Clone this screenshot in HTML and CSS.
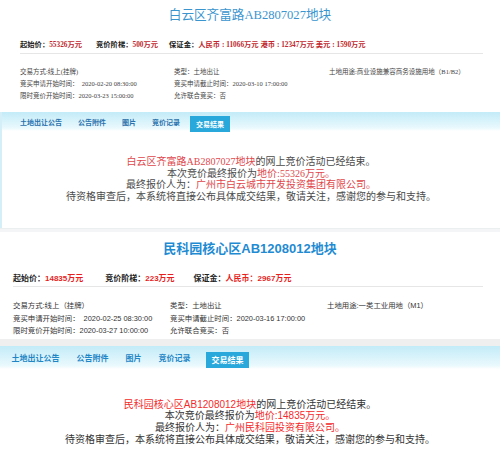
FILE: index.html
```html
<!DOCTYPE html>
<html lang="zh-CN">
<head>
<meta charset="utf-8">
<link rel="stylesheet" href="styles.css">
</head>
<body>
<div class="shot s1">
  <h1 class="title">白云区齐富路AB2807027地块</h1>
  <div class="prices">
    <span class="item"><b>起始价：</b><em>55326万元</em></span>
    <span class="item"><b>竞价阶梯：</b><em>500万元</em></span>
    <span class="item"><b>保证金：</b><em>人民币 : 11066万元 港币 : 12347万元 美元 : 1590万元</em></span>
  </div>
  <div class="info">
    <span>交易方式:线上(挂牌)</span>
    <span>类型：土地出让</span>
    <span>土地用途:商业设施兼容商务设施用地（B1/B2）</span>
    <span>竞买申请开始时间：&nbsp; 2020-02-20 08:30:00</span>
    <span>竞买申请截止时间：2020-03-10 17:00:00</span>
    <span></span>
    <span>限时竞价开始时间：2020-03-23 15:00:00</span>
    <span>允许联合竞买：否</span>
    <span></span>
  </div>
  <div class="panel">
    <div class="tabs">
      <span class="tab">土地出让公告</span>
      <span class="tab">公告附件</span>
      <span class="tab">图片</span>
      <span class="tab">竞价记录</span>
      <span class="tab active">交易结果</span>
    </div>
    <div class="result">
      <p><span class="red">白云区齐富路AB2807027地块</span>的网上竞价活动已经结束。</p>
      <p>本次竞价最终报价为<span class="red">地价:55326万元。</span></p>
      <p>最终报价人为：<span class="red">广州市白云城市开发投资集团有限公司。</span></p>
      <p>待资格审查后，本系统将直接公布具体成交结果，敬请关注，感谢您的参与和支持。</p>
    </div>
  </div>
</div>
<div class="sep"></div>
<div class="shot s2">
  <h1 class="title">民科园核心区AB1208012地块</h1>
  <div class="prices">
    <span class="item"><b>起始价：</b><em>14835万元</em></span>
    <span class="item"><b>竞价阶梯：</b><em>223万元</em></span>
    <span class="item"><b>保证金：</b><em>人民币：2967万元</em></span>
  </div>
  <div class="info">
    <span>交易方式:线上（挂牌）</span>
    <span>类型：土地出让</span>
    <span>土地用途:一类工业用地（M1）</span>
    <span>竞买申请开始时间：&nbsp; 2020-02-25 08:30:00</span>
    <span>竞买申请截止时间：2020-03-16 17:00:00</span>
    <span></span>
    <span>限时竞价开始时间：2020-03-27 10:00:00</span>
    <span>允许联合竞买：否</span>
    <span></span>
  </div>
  <div class="band"></div>
  <div class="panel">
    <div class="tabs">
      <span class="tab">土地出让公告</span>
      <span class="tab">公告附件</span>
      <span class="tab">图片</span>
      <span class="tab">竞价记录</span>
      <span class="tab active">交易结果</span>
    </div>
    <div class="result">
      <p><span class="red">民科园核心区AB1208012地块</span>的网上竞价活动已经结束。</p>
      <p>本次竞价最终报价为<span class="red">地价:14835万元。</span></p>
      <p>最终报价人为：<span class="red">广州民科园投资有限公司。</span></p>
      <p>待资格审查后，本系统将直接公布具体成交结果，敬请关注，感谢您的参与和支持。</p>
    </div>
  </div>
</div>
</body>
</html>
```
FILE: styles.css
```css
* { box-sizing: border-box; }
html, body { margin: 0; padding: 0; background: #ffffff; }
body {
  width: 500px;
  height: 458px;
  overflow: hidden;
  font-family: "Liberation Serif", "Noto Sans CJK SC", serif;
  color: #333;
}
p { margin: 0; }
b, em { font-style: normal; }

.shot { background: #fff; overflow: hidden; }
.s1 { height: 228px; }
.sep { height: 4px; background: #f3f5f6; border-top: 1px solid #eceff0; }
.s2 { height: 226px; font-family: "Liberation Sans", "Noto Sans CJK SC", sans-serif; }

.title {
  margin: 0;
  text-align: center;
  font-weight: normal;
  font-size: 13px;
  line-height: 16px;
  color: #3a95cf;
}
.s1 .title { padding-top: 7px; font-size: 12.6px; }
.s2 .title { padding-top: 9px; font-weight: bold; color: #1f8bd3; }

.prices {
  display: flex;
  white-space: nowrap;
  border-bottom: 1px solid #e6e6e6;
  margin-right: 17px;
}
.prices b { color: #222; font-weight: bold; }
.prices em { color: #c0272d; font-weight: bold; }
.s1 .prices { margin-top: 17px; margin-left: 20px; font-size: 7.3px; line-height: 10px; padding-bottom: 3px; }
.s1 .prices .item { margin-right: 14px; }
.s1 .prices .item:nth-child(2) { margin-right: 11px; }
.s2 .prices { margin-top: 17px; margin-left: 13px; font-size: 8px; line-height: 10px; padding-bottom: 2px; }
.s2 .prices em { color: #e61e1e; }
.s2 .prices .item { margin-right: 22px; }
.s2 .prices .item:nth-child(2) { margin-right: 19px; }

.info {
  display: grid;
  white-space: nowrap;
}
.s1 .info {
  margin-top: 12px;
  padding-left: 20px;
  grid-template-columns: 154px 155px 1fr;
  font-size: 6.5px;
  line-height: 12px;
  color: #444;
}
.s2 .info {
  margin-top: 13px;
  padding-left: 13px;
  grid-template-columns: 157px 157px 1fr;
  font-size: 7.4px;
  line-height: 12.5px;
  color: #333;
}

.band { height: 7px; margin-top: 1px; background: #efefef; }

.panel { border-left: 2px solid #d5eff8; }
.s1 .panel { margin-top: 10px; height: 116px; }
.s2 .panel { border-left: none; }

.tabs {
  display: flex;
  align-items: center;
  background: linear-gradient(#c2ebf8, #eaf9fd 85%, #ffffff);
  white-space: nowrap;
  font-weight: bold;
}
.s1 .tabs { height: 19px; padding-left: 12px; gap: 4px; font-size: 7px; }
.s1 .tab { padding: 0 6px; color: #2a72ad; }
.s2 .tabs { height: 23px; padding-left: 6px; gap: 6px; font-size: 8px; }
.s2 .tab { padding: 0 5.5px; color: #1f86c6; }

.tab.active {
  background: #29a8dc;
  color: #fff;
  align-self: flex-end;
  display: flex;
  align-items: center;
}
.s1 .tab.active { height: 16px; margin-bottom: -1px; }
.s2 .tab.active { height: 16px; margin-bottom: 1px; margin-left: 4px; }

.result { text-align: center; font-size: 10px; white-space: nowrap; }
.s1 .result { padding-top: 25px; line-height: 11.5px; color: #4a4a4a; }
.s1 .red { color: #e0474c; }
.s2 .result { padding-top: 30px; line-height: 11.8px; color: #333; }
.s2 .red { color: #f42a2a; }
```
